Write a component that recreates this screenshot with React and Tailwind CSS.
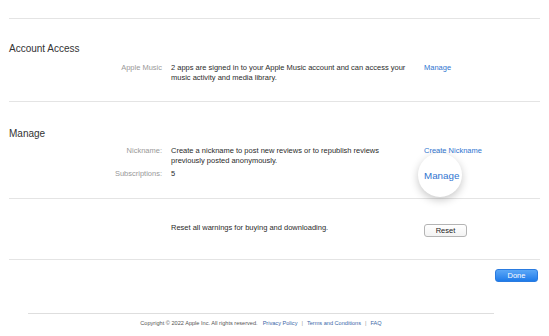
import React from 'react';

const font = { fontFamily: '"Liberation Sans", Arial, sans-serif' };

const Divider = () => <div className="h-px bg-[#e4e4e4]" />;

const Row = ({ label, children, action }) => (
  <div className="flex">
    <div className="w-[154px] shrink-0 pr-[1px] text-right text-[7.5px] leading-[10px] text-[#999]">{label}</div>
    <div className="ml-[8px] w-[242px] shrink-0 text-[7.5px] leading-[10px] text-[#2b2b2b]">{children}</div>
    <div className="ml-[11px] flex-1 text-[7.5px] leading-[10px]">{action}</div>
  </div>
);

const Link = ({ children }) => <span className="text-[#2f74d0]">{children}</span>;

export default function App() {
  return (
    <div className="relative h-[336px] w-[549px] overflow-hidden bg-white" style={font}>
      <div className="ml-[9px] w-[531px] pt-[18px]">
        <Divider />

        {/* Account Access */}
        <section className="pt-[24px] pb-[18px]">
          <h2 className="text-[10px] leading-[12px] text-[#333]">Account Access</h2>
          <div className="mt-[8px]">
            <Row label="Apple Music" action={<Link>Manage</Link>}>
              2 apps are signed in to your Apple Music account and can access your music activity and media library.
            </Row>
          </div>
        </section>
        <Divider />

        {/* Manage */}
        <section className="pt-[26px] pb-[18px]">
          <h2 className="text-[10px] leading-[12px] text-[#333]">Manage</h2>
          <div className="mt-[6px] flex flex-col gap-[3px]">
            <Row label="Nickname:" action={<Link>Create Nickname</Link>}>
              Create a nickname to post new reviews or to republish reviews previously posted anonymously.
            </Row>
            <Row
              label="Subscriptions:"
              action={
                <div className="relative">
                  <div className="absolute left-[-6px] top-[-16px] h-[44px] w-[44px] rounded-full bg-white shadow-[0_3px_8px_rgba(0,0,0,0.22)]" />
                  <span className="relative top-[2px] text-[9.8px] text-[#2f74d0]">Manage</span>
                </div>
              }
            >
              5
            </Row>
          </div>
        </section>
        <Divider />

        {/* Reset */}
        <section className="pt-[19px] pb-[22px]">
          <div className="flex items-center">
            <div className="ml-[162px] w-[253px] text-[7.5px] leading-[10px] text-[#2b2b2b]">
              Reset all warnings for buying and downloading.
            </div>
            <button className="mt-[6px] h-[13px] w-[43px] rounded-[3px] border border-[#b4b4b4] bg-gradient-to-b from-white to-[#f3f3f3] text-[7.5px] leading-[11px] text-[#222]">
              Reset
            </button>
          </div>
        </section>
        <Divider />

        <div className="flex justify-end pt-[9px] pr-[2px]">
          <button className="h-[13px] w-[43px] rounded-[3px] border border-[#2a7be0] bg-gradient-to-b from-[#5aa7f7] to-[#1d7be9] text-[7.5px] leading-[11px] text-white">
            Done
          </button>
        </div>
      </div>

      {/* Footer */}
      <footer className="ml-[28px] mt-[31px] w-[466px]">
        <div className="h-px bg-[#dedede]" />
        <p className="pt-[5px] text-center text-[5.6px] leading-[8px] text-[#555]">
          Copyright © 2022 Apple Inc. All rights reserved.
          <span className="ml-[5px] text-[#3a67a8]">Privacy Policy</span>
          <span className="mx-[4px] text-[#999]">|</span>
          <span className="text-[#3a67a8]">Terms and Conditions</span>
          <span className="mx-[4px] text-[#999]">|</span>
          <span className="text-[#3a67a8]">FAQ</span>
        </p>
      </footer>
    </div>
  );
}
